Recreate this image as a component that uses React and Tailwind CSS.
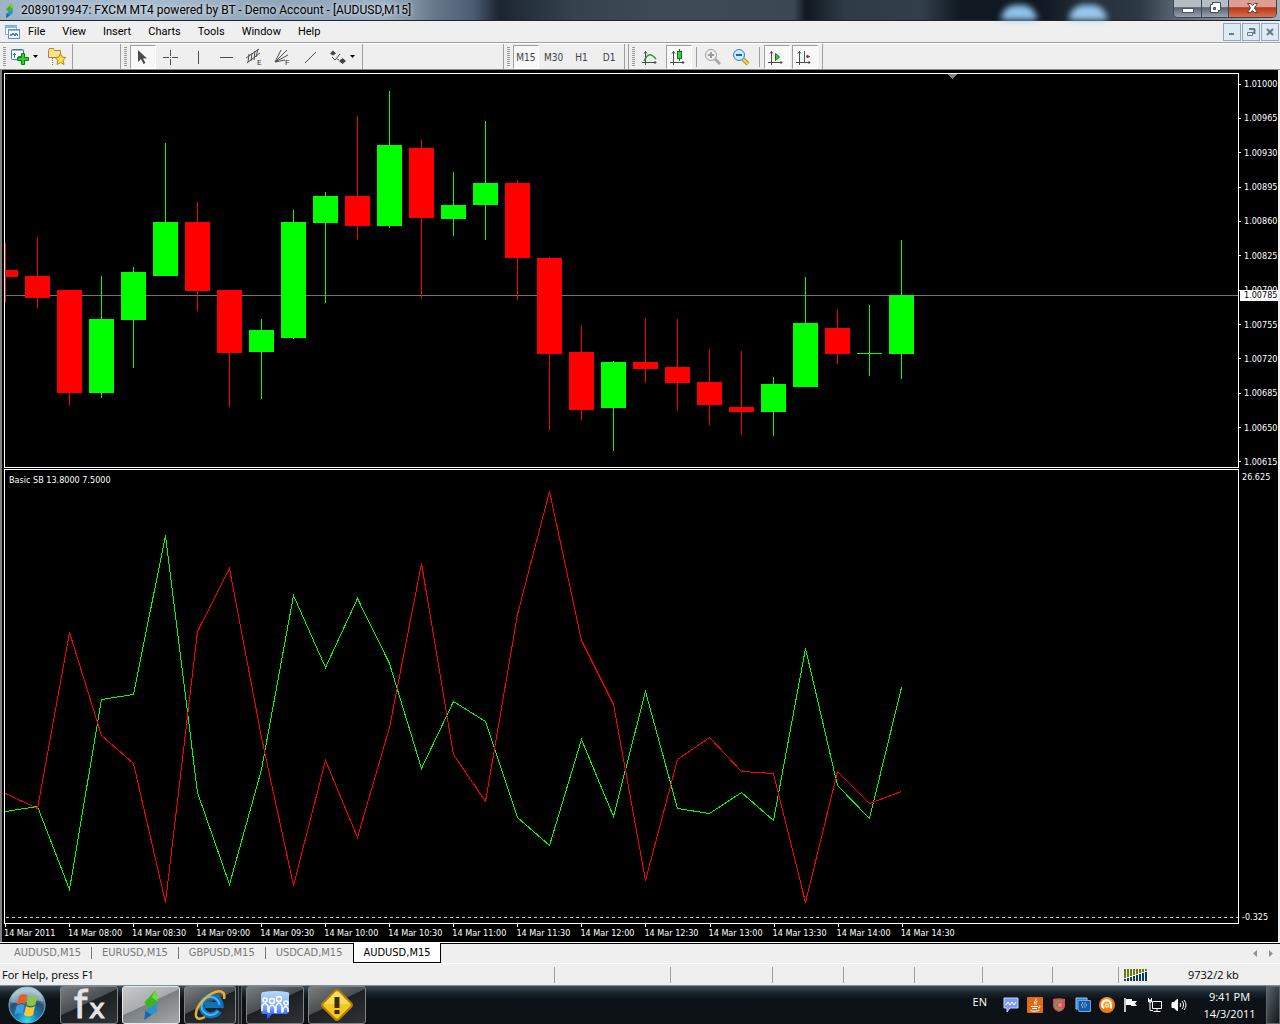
import React, { useState } from 'react';

// [high, body top, body bottom, low, direction]
const candles = [
    [243, 270, 277, 303, 'down'],
    [237, 276, 298, 308, 'down'],
    [290, 290, 393, 405, 'down'],
    [276, 319, 393, 398, 'up'],
    [267, 272, 320, 368, 'up'],
    [143, 222, 276, 276, 'up'],
    [202, 222, 291, 311, 'down'],
    [290, 290, 353, 407, 'down'],
    [319, 330, 352, 399, 'up'],
    [210, 222, 338, 339, 'up'],
    [192, 196, 223, 303, 'up'],
    [116, 196, 226, 240, 'down'],
    [91, 145, 226, 228, 'up'],
    [140, 148, 218, 299, 'down'],
    [172, 205, 219, 236, 'up'],
    [121, 183, 205, 240, 'up'],
    [180, 183, 258, 300, 'down'],
    [257, 258, 354, 430, 'down'],
    [325, 352, 410, 420, 'down'],
    [361, 362, 408, 451, 'up'],
    [318, 362, 369, 383, 'down'],
    [319, 367, 383, 411, 'down'],
    [349, 382, 405, 425, 'down'],
    [351, 407, 412, 435, 'down'],
    [377, 384, 412, 436, 'up'],
    [277, 323, 387, 387, 'up'],
    [309, 328, 354, 364, 'down'],
    [305, 353, 354, 376, 'up'],
    [240, 295, 354, 379, 'up'],
];

const bulls = [811, 806, 889, 699, 694, 535, 792, 884, 769, 595, 667, 598, 663, 768, 701, 721, 817, 845, 739, 816, 691, 808, 813, 792, 820, 648, 785, 818, 687];
const bears = [793, 808, 632, 735, 763, 902, 631, 568, 737, 885, 760, 837, 727, 563, 754, 801, 614, 491, 640, 704, 880, 759, 737, 771, 773, 902, 771, 803, 791];

const prices = ['1.01000', '1.00965', '1.00930', '1.00895', '1.00860', '1.00825', '1.00790', '1.00755', '1.00720', '1.00685', '1.00650', '1.00615'];
const times = ['2011', '08:00', '08:30', '09:00', '09:30', '10:00', '10:30', '11:00', '11:30', '12:00', '12:30', '13:00', '13:30', '14:00', '14:30'];
const menus = ['File', 'View', 'Insert', 'Charts', 'Tools', 'Window', 'Help'];
const tabs = ['AUDUSD,M15', 'EURUSD,M15', 'GBPUSD,M15', 'USDCAD,M15', 'AUDUSD,M15'];

const toPoints = (values) => values.map((y, i) => `${5.5 + i * 32},${y + 0.5}`).join(' ');

function Logo({ className }) {
    return (
        <svg viewBox="0 0 15 29" className={className} aria-hidden="true">
            <path d="M12 0L14 11L6 18L1 12Z" fill="#35b81c" />
            <path d="M12 0L14 11L8 7Z" fill="#6fdc3a" />
            <path d="M5 18L14 12L13 21L1 29L2 20Z" fill="#2f8fd0" />
            <path d="M1 29L2 20L8 24Z" fill="#1d679f" />
        </svg>
    );
}

function TitleBar() {
    return (
        <header className="h-[21px] shrink-0 flex items-center border-b border-[#1c2630] pl-[5px] bg-[linear-gradient(90deg,#9fb3c6_0%,#a9bccd_12%,#8fa4b8_22%,#9db1c3_30%,#65788a_34%,#4b5c70_37%,#1b2530_39%,#36434f_45%,#3e4a56_52%,#3b4753_62%,#101820_63%,#2f3b45_66%,#323e49_72%,#111a23_75%,#0f1720_81%,#22303c_85%,#2c3844_89%,#5d6a76_92%,#8b98a4_97%,#a3b0bd_100%)]">
            <Logo className="w-[9px] h-[15px] mr-[7px] shrink-0" />
            <h1 className="text-[12px] leading-[20px] text-black whitespace-nowrap grow [text-shadow:0_0_5px_#ffffff]">
                2089019947: FXCM MT4 powered by BT - Demo Account - [AUDUSD,M15]
            </h1>
            <div className="self-stretch flex gap-[32px] mr-[66px]">
                <span className="w-[36px] h-[15px] self-end rounded-t-2xl bg-[#8fc4ee] blur-[3px]" />
                <span className="w-[38px] h-[15px] self-end rounded-t-2xl bg-[#9cc8ef] blur-[3px]" />
            </div>
            <div className="self-start h-[18px] flex border border-t-0 border-[#3c444e] rounded-b-[5px] overflow-hidden mr-[3px]">
                <button aria-label="Minimize" className="w-[28px] flex justify-center bg-linear-to-b from-[#b4bcc4] from-40% via-[#59636e] via-45% to-[#98a4b0] border-r border-[#3c444e]">
                    <svg viewBox="0 0 12 17" className="w-[12px] h-[17px]"><rect x="0.5" y="8.5" width="11" height="4" fill="#fff" stroke="#4c5560" /></svg>
                </button>
                <button aria-label="Restore" className="w-[27px] flex justify-center bg-linear-to-b from-[#b4bcc4] from-40% via-[#59636e] via-45% to-[#98a4b0] border-r border-[#3c444e]">
                    <svg viewBox="0 0 13 17" className="w-[13px] h-[17px]">
                        <path d="M3.5 2.5h8v8h-2v2h-8v-8h2z" fill="#fff" stroke="#434c59" />
                        <path d="M4.5 7.5h2v2h-2z" fill="#7c8793" stroke="#434c59" />
                    </svg>
                </button>
                <button aria-label="Close" className="w-[47px] flex justify-center bg-linear-to-b from-[#dba093] from-40% via-[#b7331c] via-45% to-[#d8704a]">
                    <svg viewBox="0 0 13 17" className="w-[13px] h-[17px]">
                        <path d="M1.5 3.5h3l2 2 2-2h3l-3 4.5 3 4.5h-3l-2-2-2 2h-3l3-4.5z" fill="#fff" stroke="#5b3b3b" />
                    </svg>
                </button>
            </div>
        </header>
    );
}

function MdiButton({ label, children }) {
    return (
        <button aria-label={label} className="w-[18px] h-[18px] border border-[#93a5b8] bg-[#dce9f7] flex items-center justify-center">
            <svg viewBox="0 0 10 10" className="w-[10px] h-[10px]" fill="none" stroke="#6a7b8c">{children}</svg>
        </button>
    );
}

function MenuBar() {
    return (
        <nav className="h-[22px] shrink-0 flex items-center border-b border-[#a0a0a0] pl-[5px] pr-[1px]">
            <svg viewBox="0 0 15 14" className="w-[15px] h-[14px] mr-[8px]" shapeRendering="crispEdges" aria-hidden="true">
                <rect x="0.5" y="0.5" width="11" height="9" fill="#fff" stroke="#7fa9dd" />
                <rect x="1" y="1" width="11" height="2" fill="#8cb4e6" />
                <rect x="3.5" y="4.5" width="11" height="9" fill="#fff" stroke="#5c93d6" />
                <rect x="4" y="5" width="10" height="1" fill="#8cb4e6" />
                <path d="M5 9l1 2 2-3 2 3 1-3 2 3" fill="none" stroke="#4a86cf" />
            </svg>
            <div className="flex gap-[17px] grow">
                {menus.map((item) => (
                    <button key={item} className="text-[11px] leading-[20px] text-black">{item}</button>
                ))}
            </div>
            <div className="flex gap-[1px]">
                <MdiButton label="Minimize chart"><path d="M2 7h5" strokeWidth="2" /></MdiButton>
                <MdiButton label="Restore chart">
                    <path d="M3 2h6M8.5 2v4h-2" strokeWidth="2" />
                    <path d="M1.5 5.5h5v3h-5z" />
                </MdiButton>
                <MdiButton label="Close chart"><path d="M2 2l6 6M8 2l-6 6" strokeWidth="2" /></MdiButton>
            </div>
        </nav>
    );
}

function Grip() {
    return <span className="w-[3px] h-[20px] ml-[3px] mr-[3px] shrink-0 bg-[repeating-linear-gradient(180deg,#9a9a9a_0_1px,#efefef_1px_2px)]" />;
}

function Tool({ label, pressed, children }) {
    return (
        <button
            aria-label={label}
            className={`w-[26px] h-[24px] mr-[2px] pr-[2px] shrink-0 flex items-center justify-center border text-[#404040] ${pressed ? 'bg-[#f8f8f8] border-t-[#a0a0a0] border-l-[#a0a0a0] border-r-white border-b-white' : 'border-transparent'}`}
        >
            {children}
        </button>
    );
}

function Icon({ children, crisp }) {
    return (
        <svg viewBox="0 0 18 18" className="w-[18px] h-[18px] overflow-visible" fill="none" stroke="#4d4d4d" shapeRendering={crisp ? 'crispEdges' : 'auto'}>
            {children}
        </svg>
    );
}

function Axes() {
    return <path d="M4.5 3v14M1 14.5h14M3 5.5l1.5-2 1.5 2M13.5 13l1.5 1.5-1.5 1.5" stroke="#4a4a4a" />;
}

function Caret() {
    return <svg viewBox="0 0 5 3" className="w-[5px] h-[3px]"><path d="M0 0h5L2.5 3z" fill="#000" /></svg>;
}

function Toolbar() {
    const [period, setPeriod] = useState('M15');

    return (
        <div className="h-[27px] shrink-0 flex border-t border-t-white border-b border-b-[#8a8a8a]">
            <div className="w-[73px] flex items-center border-r border-[#a0a0a0] shrink-0">
                <Grip />
                <button aria-label="New chart" className="flex items-center gap-[4px] ml-[2px]">
                    <svg viewBox="0 0 18 18" className="w-[18px] h-[18px]">
                        <rect x="0.5" y="1.5" width="12" height="10" rx="1" fill="#fff" stroke="#3b76ab" />
                        <path d="M1 2h11v1H1z" fill="#8fb9de" />
                        <path d="M3.5 5v5M2 6.5h3M7 8.5h4" stroke="#3b76ab" />
                        <path d="M10.5 5.5h3v4h4v3h-4v4h-3v-4h-4v-3h4z" fill="#2fd12f" stroke="#0a7a0a" />
                    </svg>
                    <Caret />
                </button>
                <button aria-label="Profiles" className="ml-[10px]">
                    <svg viewBox="0 0 18 18" className="w-[18px] h-[18px]">
                        <path d="M0.5 2.5l1-2h4l1 2h6v7h-12z" fill="#f9e08b" stroke="#b58a22" />
                        <path d="M4.5 10v7" stroke="#777" strokeDasharray="1 1" />
                        <path d="M12.5 5.5l1.7 3.6 3.6.4-2.6 2.8.8 4.2-3.5-2-3.5 2 .8-4.2-2.7-2.8 3.7-.4z" fill="#ffdf4d" stroke="#b5851d" />
                    </svg>
                </button>
            </div>
            <div className="w-[48px] border-r border-[#a0a0a0] shrink-0" />
            <div className="w-[242px] flex items-center border-r border-[#a0a0a0] shrink-0">
                <Grip />
                <Tool label="Cursor" pressed>
                    <Icon><path d="M5 2v12l3-3 2.5 5 2-1-2.5-4.5H14z" fill="#4a4a4a" stroke="none" /></Icon>
                </Tool>
                <Tool label="Crosshair">
                    <Icon crisp><path d="M9.5 2v6M9.5 11v6M2 9.5h6M11 9.5h6M9 9.5h1" /></Icon>
                </Tool>
                <Tool label="Vertical line"><Icon crisp><path d="M9.5 3v13" /></Icon></Tool>
                <Tool label="Horizontal line"><Icon crisp><path d="M3 9.5h13" /></Icon></Tool>
                <Tool label="Equidistant channel">
                    <Icon>
                        <path d="M1 10L14 1M2 15L15 5M4 6l-1 8M7 5l-1 8M10 3l-1 9M13 1l-2 8" />
                        <text x="12" y="17" fontSize="8" fill="#333" stroke="none">E</text>
                    </Icon>
                </Tool>
                <Tool label="Fibonacci fan">
                    <Icon>
                        <path d="M2 14L14 2M2 14L8 2M2 14l13-7M2 14l10-2" />
                        <text x="12" y="17" fontSize="8" fill="#333" stroke="none">F</text>
                    </Icon>
                </Tool>
                <Tool label="Trendline"><Icon><path d="M4 15L15 4" /></Icon></Tool>
                <button aria-label="Arrows" className="flex items-center gap-[3px] ml-[3px]">
                    <Icon>
                        <path d="M1 5.5l3-3 3 3-3 2zM10 13l3.5-3 3.5 3-3.5 3z" fill="#444" stroke="none" />
                        <path d="M3 9l3 3 5-6M8 11l2 1" />
                    </Icon>
                    <Caret />
                </button>
            </div>
            <div className="w-[141px] border-r border-[#a0a0a0] shrink-0" />
            <div className="w-[121px] flex items-center border-r border-[#a0a0a0] shrink-0 font-['DejaVu_Sans_Condensed','DejaVu_Sans',sans-serif] text-[10px]">
                <Grip />
                {['M15', 'M30', 'H1', 'D1'].map((name) => (
                    <button
                        key={name}
                        onClick={() => setPeriod(name)}
                        className={`w-[26px] h-[24px] mr-[2px] pt-[2px] border text-[#404040] text-center ${period === name ? 'bg-[#f8f8f8] border-t-[#a0a0a0] border-l-[#a0a0a0] border-r-white border-b-white' : 'border-transparent'}`}
                    >
                        {name}
                    </button>
                ))}
            </div>
            <div className="w-[198px] flex items-center border-r border-[#a0a0a0] shrink-0">
                <span className="w-[4px] self-stretch border-r border-[#a0a0a0] shrink-0" />
                <Grip />
                <Tool label="Line chart">
                    <Icon>
                        <Axes />
                        <path d="M3 13c4-8 7-8 12-2" stroke="#2c9e2c" strokeWidth="1.5" />
                    </Icon>
                </Tool>
                <Tool label="Candlesticks" pressed>
                    <Icon>
                        <Axes />
                        <path d="M10.5 1v12" stroke="#0a7a0a" />
                        <rect x="8.5" y="3.5" width="4" height="7" fill="#2fd14a" stroke="#0a7a0a" />
                    </Icon>
                </Tool>
                <span className="w-px h-[20px] bg-[#a0a0a0] ml-[2px] mr-[4px] shrink-0" />
                <Tool label="Zoom in">
                    <Icon>
                        <path d="M11 11l5 5" stroke="#aaa" strokeWidth="3" />
                        <circle cx="7" cy="7" r="5.5" fill="#efefef" stroke="#9a9a9a" />
                        <path d="M4 7h6M7 4v6" stroke="#9a9a9a" strokeWidth="2" />
                    </Icon>
                </Tool>
                <Tool label="Zoom out">
                    <Icon>
                        <path d="M11 11l5 5" stroke="#b58a22" strokeWidth="4" />
                        <path d="M11 11l5 5" stroke="#ffd84d" strokeWidth="2" />
                        <circle cx="7" cy="7" r="5.5" fill="#cdeafc" stroke="#2f7fc0" />
                        <path d="M4 7h6" stroke="#1f64a8" strokeWidth="2" />
                    </Icon>
                </Tool>
                <span className="w-px h-[20px] bg-[#a0a0a0] ml-[2px] mr-[4px] shrink-0" />
                <Tool label="Auto scroll" pressed>
                    <Icon>
                        <Axes />
                        <path d="M8.5 5.5v7l4-3.5z" fill="#35c935" stroke="#0a7a0a" />
                    </Icon>
                </Tool>
                <Tool label="Chart shift" pressed>
                    <Icon>
                        <Axes />
                        <path d="M9.5 3v11" stroke="#1d5f9c" />
                        <path d="M15 8.5h-3M13 7l-2 1.5 2 1.5z" fill="#d33a14" stroke="#b52d0c" />
                    </Icon>
                </Tool>
            </div>
        </div>
    );
}

function PricePane() {
    return (
        <section className="flex-[395] min-h-0 flex">
            <div className="grow min-w-0 border border-white">
                <svg viewBox="5 74 1233 393" preserveAspectRatio="none" className="block w-full h-full" shapeRendering="crispEdges">
                    <rect x="5" y="295" width="1233" height="1" fill="#6f7472" />
                    <path d="M947 74h10l-5 5z" fill="#808080" />
                    {candles.map(([high, top, bottom, low, dir], i) => (
                        <g key={i} fill={dir === 'up' ? '#00ff00' : '#ff0000'}>
                            <rect x={5 + i * 32} y={high} width="1" height={low - high} />
                            <rect x={i * 32 - 7} y={top} width="25" height={bottom - top} />
                        </g>
                    ))}
                </svg>
            </div>
            <div className="w-[39px] shrink-0 relative flex flex-col justify-between pt-[5px]">
                {prices.map((price) => (
                    <div key={price} className="flex items-center h-[12px] gap-[3px]">
                        <span className="w-[2px] h-px bg-white" />
                        <span className="leading-[12px]">{price}</span>
                    </div>
                ))}
                <span className="absolute left-[1px] right-0 top-[55%] h-[11px] pl-[4px] leading-[11px] bg-white text-black">1.00785</span>
            </div>
        </section>
    );
}

function IndicatorPane() {
    return (
        <section className="flex-[455] min-h-0 flex">
            <div className="grow min-w-0 border border-white relative">
                <svg viewBox="5 470 1233 453" preserveAspectRatio="none" className="block w-full h-full" shapeRendering="crispEdges" fill="none">
                    <path d="M6 917.5h1232" stroke="#c8c8c8" strokeDasharray="3 3" />
                    <polyline points={toPoints(bulls)} stroke="#00ff00" />
                    <polyline points={toPoints(bears)} stroke="#ff0000" />
                </svg>
                <span className="absolute left-[4px] top-[4px] leading-[12px]">Basic SB 13.8000 7.5000</span>
            </div>
            <div className="w-[39px] shrink-0 flex flex-col justify-between pt-[2px] pb-[1px]">
                <span className="leading-[12px] pl-[3px]">26.625</span>
                <span className="leading-[12px] pl-[3px]">-0.325</span>
            </div>
        </section>
    );
}

function Chart() {
    return (
        <main className="grow min-h-[400px] flex flex-col bg-black text-white font-['DejaVu_Sans_Condensed','DejaVu_Sans',sans-serif] text-[9px] pt-[3px] pl-[2px] border-l-2 border-l-[#808080] border-r-2 border-r-[#efefef]">
            <PricePane />
            <div className="h-px shrink-0" />
            <IndicatorPane />
            <div className="h-[18px] shrink-0 flex pr-[39px]">
                {times.map((time, i) => (
                    <div key={time} className={`min-w-0 whitespace-nowrap ${i === times.length - 1 ? 'flex-[338]' : 'flex-[64]'}`}>
                        <span className="block w-px h-[3px] ml-px bg-white" />
                        <span className="block leading-[12px]">14 Mar {time}</span>
                    </div>
                ))}
            </div>
        </main>
    );
}

function ChartTabs() {
    const [active, setActive] = useState(4);

    return (
        <div className="h-[22px] shrink-0 flex border-t border-t-white border-b border-b-white font-['DejaVu_Sans_Condensed','DejaVu_Sans',sans-serif] text-[11px]">
            <div className="grow flex items-start border-t border-t-black pl-[4px] pr-[4px]">
                {tabs.map((tab, i) => (
                    <button
                        key={i}
                        onClick={() => setActive(i)}
                        className={active === i
                            ? 'px-[9px] -mt-px h-[20px] bg-white text-black border border-t-0 border-black leading-[18px]'
                            : `px-[10px] mt-[3px] h-[12px] text-[#777777] leading-[12px] border-r ${i + 1 === active ? 'border-transparent' : 'border-[#777777]'}`}
                    >
                        {tab}
                    </button>
                ))}
                <div className="ml-auto self-center flex items-center gap-[12px] pr-[3px]">
                    <button aria-label="Scroll left"><svg viewBox="0 0 4 7" className="w-[4px] h-[7px]"><path d="M4 0v7L0 3.5z" fill="#909090" /></svg></button>
                    <button aria-label="Scroll right"><svg viewBox="0 0 4 7" className="w-[4px] h-[7px]"><path d="M0 0v7l4-3.5z" fill="#909090" /></svg></button>
                </div>
            </div>
        </div>
    );
}

function StatusBar() {
    const cells = ['w-[116px]', 'w-[102px]', 'w-[71px]', 'w-[71px]', 'w-[68px]', 'w-[70px]', 'w-[66px]'];

    return (
        <footer className="h-[21px] shrink-0 flex items-center pl-[2px] font-['Open_Sans',sans-serif] text-[11px] leading-[18px] text-black">
            <span className="grow">For Help, press F1</span>
            {cells.map((cell, i) => <span key={i} className={`${cell} h-[16px] border-l border-[#a0a0a0] shrink-0`} />)}
            <div className="w-[162px] h-[16px] border-l border-[#a0a0a0] flex items-center pl-[5px] shrink-0">
                <svg viewBox="0 0 24 12" className="w-[24px] h-[12px]" shapeRendering="crispEdges">
                    {[0, 1, 2, 3, 4, 5, 6, 7].map((n) => (
                        <g key={n}>
                            <rect x={n * 3} y="0" width="2" height={9 - n} fill="#6b7a0a" />
                            <rect x={n * 3} y={10 - n} width="2" height={2 + n} fill="#0d3d5c" />
                        </g>
                    ))}
                </svg>
                <span className="ml-[40px]">9732/2 kb</span>
            </div>
        </footer>
    );
}

function TaskButton({ label, active, children }) {
    return (
        <button
            aria-label={label}
            className={`w-[58px] h-[38px] shrink-0 flex items-center justify-center rounded-[3px] border ${active ? 'border-[#e8e8e8] bg-[linear-gradient(155deg,#c8cacb_0%,#a9abad_45%,#7c7f82_46%,#a6a8aa_100%)]' : 'border-[#7e8488] bg-[linear-gradient(155deg,#7b7e81_0%,#4a4d50_45%,#1d2023_46%,#303336_100%)]'}`}
        >
            {children}
        </button>
    );
}

function Tray() {
    return (
        <div className="flex items-center gap-[8px]">
            <svg viewBox="0 0 16 16" className="w-[16px] h-[16px]">
                <path d="M1 1h14v10H7l-3 4v-4H1z" fill="#7f9cf5" stroke="#c5d3ff" />
                <path d="M3 8l2-3 2 3 2-3 2 3 2-3" fill="none" stroke="#fff" />
            </svg>
            <svg viewBox="0 0 16 16" className="w-[16px] h-[16px]">
                <rect width="16" height="16" rx="1" fill="#df6b16" />
                <path d="M9 1.5c1 2-3 3-1 6M10.5 4c-2 1-2 2-1 3.5M4 9.5h7M12 9c2 0 1 2-1 2M5 11.5h5M3.5 13.5c2 1 7 1 9-.5" fill="none" stroke="#fff" />
            </svg>
            <svg viewBox="0 0 16 16" className="w-[16px] h-[16px]">
                <path d="M2 2c4-1 8-1 12 0v6c0 4-3 6-6 7-3-1-6-3-6-7z" fill="#e5485a" />
                <path d="M11 5a4 4 0 1 0 0 6" fill="none" stroke="#4caf50" strokeWidth="2" />
                <circle cx="9" cy="8" r="2" fill="#ff7c8c" />
            </svg>
            <svg viewBox="0 0 16 16" className="w-[16px] h-[16px]">
                <path d="M1 1h11v11H1z" fill="#3d84cf" stroke="#9cc7f0" />
                <path d="M3 3.5h12.5v11H4l-1-3z" fill="#145aa8" stroke="#6ca6e0" />
                <path d="M6 8h1M8.5 8h1M11 8h1M7 10h1M9.5 10h1M7 6h1M9.5 6h1" stroke="#fff" />
            </svg>
            <svg viewBox="0 0 16 16" className="w-[16px] h-[16px]">
                <circle cx="8" cy="8" r="8" fill="#f07a0c" />
                <circle cx="8" cy="6" r="5.5" fill="#f9a22e" />
                <path d="M5 11.5a4.5 4.5 0 1 1 7-3.5v3.5" fill="none" stroke="#fff" strokeWidth="2" />
                <circle cx="8" cy="8.5" r="1.5" fill="none" stroke="#fff" strokeWidth="1" />
            </svg>
            <svg viewBox="0 0 16 16" className="w-[16px] h-[16px]">
                <path d="M2 1v14" stroke="#fff" strokeWidth="1.5" />
                <path d="M3 2h6v2h5l-2 2.5 2 2.5H8V8H3z" fill="#fff" />
            </svg>
            <svg viewBox="0 0 16 16" className="w-[16px] h-[16px]" fill="none" stroke="#fff">
                <path d="M5.5 4.5h9v7h-9zM10 12v2M6.5 14.5h7" />
                <path d="M1.5 1v4h3V1M3 5v8.5h3" />
                <path d="M1 3.5h4" strokeWidth="2" />
            </svg>
            <svg viewBox="0 0 16 16" className="w-[16px] h-[16px]" fill="none" stroke="#fff">
                <path d="M1 5.5h2L6.5 2v12L3 10.5H1z" fill="#fff" />
                <path d="M9 6a3 3 0 0 1 0 4M11 4a6 6 0 0 1 0 8M13 3a8 8 0 0 1 0 10" />
            </svg>
        </div>
    );
}

function Taskbar() {
    return (
        <footer className="h-[39px] shrink-0 flex items-center border-t border-[#7b909e] text-white font-['Open_Sans',sans-serif] bg-[linear-gradient(180deg,#3c4b57_0%,#1b242b_18%,#0c1217_35%,#0d1115_100%)]">
            <button aria-label="Start" className="ml-[7px] mr-[13px] shrink-0">
                <svg viewBox="0 0 40 38" className="w-[40px] h-[38px]">
                    <defs>
                        <radialGradient id="orb" cx="50%" cy="95%" r="85%">
                            <stop offset="0%" stopColor="#2fe0ff" />
                            <stop offset="35%" stopColor="#1584b8" />
                            <stop offset="70%" stopColor="#28516f" />
                            <stop offset="100%" stopColor="#a3bdcb" />
                        </radialGradient>
                    </defs>
                    <circle cx="20" cy="19" r="18" fill="url(#orb)" stroke="#7eafc6" />
                    <path d="M4 16a16 15 0 0 1 32 0c-8-4-22 4-32 0z" fill="#b9d3df" opacity="0.5" />
                    <path d="M12 10c3-2 5-2 8-1l-2 9c-3-1-5-1-8 1z" fill="#ee5a24" />
                    <path d="M21.5 9.5c3 2 6 2 9 0l-2 9c-3 2-6 2-9 0z" fill="#8cc63f" />
                    <path d="M9.5 20c3-2 5-2 8-1l-2 9c-3-1-5-1-8 1z" fill="#3b9de0" />
                    <path d="M19 20c3 2 6 2 9 0l-2 9c-3 2-6 2-9 0z" fill="#fdc82f" />
                </svg>
            </button>
            <div className="flex gap-[4px]">
                <TaskButton label="fx">
                    <svg viewBox="0 0 32 32" className="w-[32px] h-[32px] overflow-visible font-['DejaVu_Sans',sans-serif]" fill="#e4e4e4" stroke="#e4e4e4">
                        <text x="1" y="29" fontSize="37">f</text>
                        <text x="16" y="29" fontSize="27">x</text>
                    </svg>
                </TaskButton>
                <TaskButton label="MetaTrader" active>
                    <Logo className="w-[16px] h-[30px]" />
                </TaskButton>
                <div className="flex w-[58px]">
                    <button aria-label="Internet Explorer" className="w-[52px] h-[38px] shrink-0 flex items-center justify-center rounded-[3px] border border-[#7e8488] bg-[linear-gradient(155deg,#7b7e81_0%,#4a4d50_45%,#1d2023_46%,#303336_100%)]">
                        <svg viewBox="0 0 32 32" className="w-[32px] h-[32px]" fill="none">
                            <path d="M25 22a9.5 9.5 0 1 1 1.5-6H11" stroke="#1273bd" strokeWidth="6" />
                            <path d="M24 22a9 9 0 1 1 1.5-6" stroke="#48b5f0" strokeWidth="2" />
                            <path d="M30 10C32 2 25 0 17 5 8 10 1 20 2 27c1 4 5 3 9 1" stroke="#e9b22c" strokeWidth="2.5" />
                        </svg>
                    </button>
                    <span className="w-[3px] h-[38px] border-r border-[#5c6266] bg-[#1d2023] shrink-0" />
                    <span className="w-[3px] h-[38px] border-r border-[#5c6266] bg-[#1d2023] shrink-0" />
                </div>
                <TaskButton label="Messenger">
                    <svg viewBox="0 0 32 32" className="w-[32px] h-[32px]">
                        <defs>
                            <linearGradient id="bubble" x1="0" y1="0" x2="0" y2="1">
                                <stop offset="0%" stopColor="#b6dcff" />
                                <stop offset="60%" stopColor="#6fa0ff" />
                                <stop offset="100%" stopColor="#1a2cff" />
                            </linearGradient>
                        </defs>
                        <path d="M4 3q12-2 24 0 3 0 2 4v14q0 4-3 4H13l-5 6v-6H4q-2 0-2-4V7q0-4 2-4z" fill="url(#bubble)" />
                        <g fill="none" stroke="#fff" strokeWidth="1.5">
                            <circle cx="6" cy="11" r="2" /><circle cx="13" cy="12" r="2.5" /><circle cx="20" cy="10" r="2.5" /><circle cx="27" cy="14" r="2" />
                            <path d="M3 22v-5q3-5 6 0v6M10 24v-5q3-6 6 0v5M17 24v-7q3-6 6 0v7M24 23v-3q3-5 5 0v3" />
                        </g>
                    </svg>
                </TaskButton>
                <TaskButton label="Warning">
                    <svg viewBox="0 0 32 32" className="w-[32px] h-[32px]">
                        <path d="M14 2q2-2 4 0l12 12q2 2 0 4L18 30q-2 2-4 0L2 18q-2-2 0-4z" fill="#f3c91d" stroke="#b57c0a" strokeWidth="2" />
                        <path d="M14 3q2-1 4 0l11 12H3z" fill="#fbe98a" opacity="0.6" />
                        <path d="M13.5 8h5v11h-5zM13.5 21h5v4h-5z" fill="#3a2d10" />
                    </svg>
                </TaskButton>
            </div>
            <span className="ml-auto mr-[16px] -mt-[6px] text-[11px]">EN</span>
            <Tray />
            <time className="w-[79px] pl-[6px] text-center text-[11px] leading-[17px]">
                9:41 PM
                <br />
                14/3/2011
            </time>
            <button aria-label="Show desktop" className="w-[14px] h-[38px] border border-[#5c656c] bg-linear-to-br from-[#5e666c] to-[#14181b] shrink-0" />
        </footer>
    );
}

export default function App() {
    return (
        <div className="min-h-screen flex flex-col bg-[#efefef] font-['Roboto','Open_Sans',sans-serif] overflow-hidden">
            <TitleBar />
            <MenuBar />
            <Toolbar />
            <Chart />
            <ChartTabs />
            <StatusBar />
            <Taskbar />
        </div>
    );
}
